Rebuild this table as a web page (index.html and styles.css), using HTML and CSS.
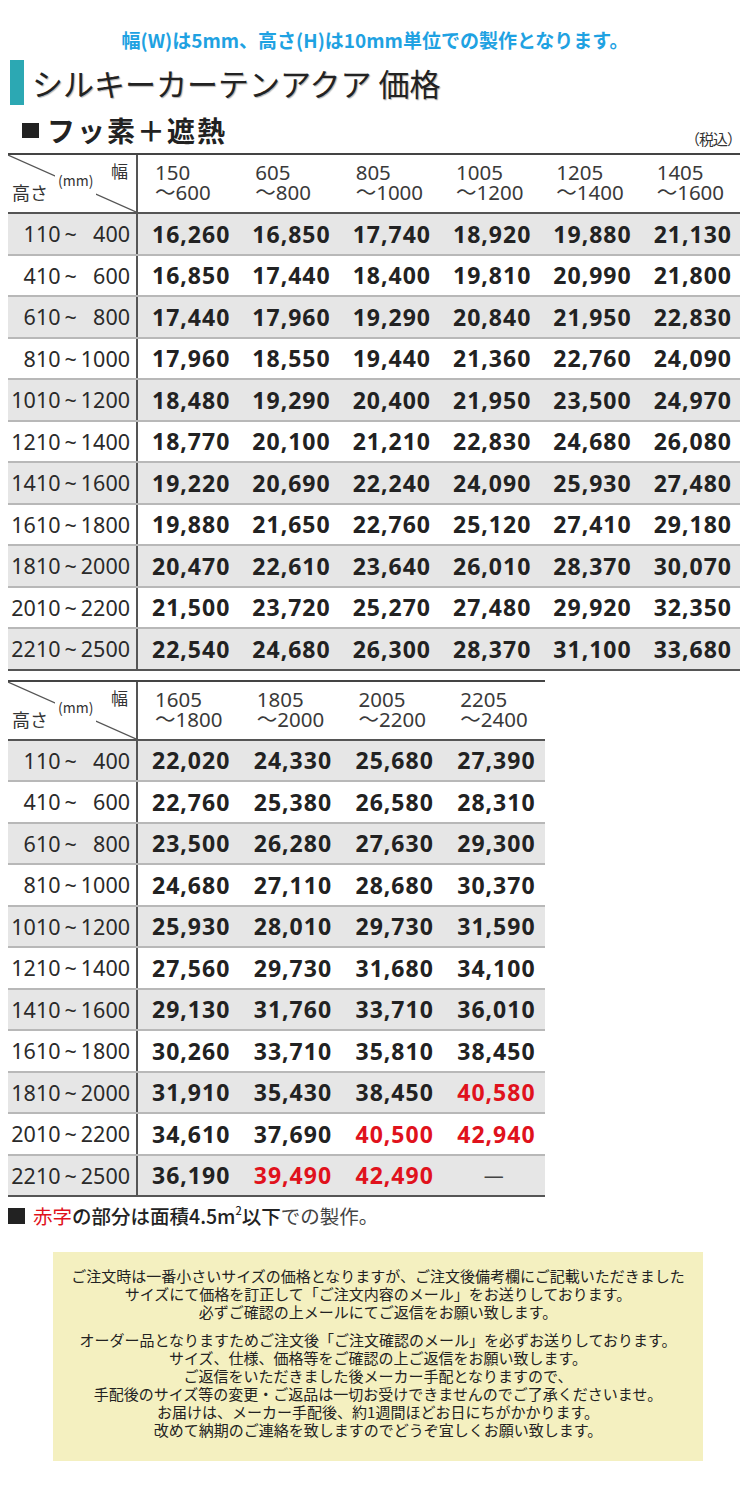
FILE: index.html
```html
<!DOCTYPE html>
<html lang="ja">
<head>
<meta charset="utf-8">
<title>シルキーカーテンアクア 価格</title>
<link rel="stylesheet" href="styles.css">
</head>
<body>
<div class="page">
  <p class="notice">幅(W)は5mm、高さ(H)は10mm単位での製作となります。</p>

  <div class="title">
    <span class="title-bar"></span>
    <h1 class="title-text">シルキーカーテンアクア 価格</h1>
  </div>

  <div class="subhead">
    <h2 class="subtitle"><span class="sq"></span>フッ素＋遮熱</h2>
    <span class="tax">（税込）</span>
  </div>

  <div class="ptable cols6">
    <div class="prow head">
      <div class="corner">
        <svg class="diag" viewBox="0 0 128 57" preserveAspectRatio="none"><line x1="0" y1="0" x2="128" y2="57" stroke="#555" stroke-width="1.2"/></svg>
        <span class="c-w">幅</span>
        <span class="c-mm">(mm)</span>
        <span class="c-h">高さ</span>
      </div>
      <div class="hc"><span>150</span><span>～600</span></div>
      <div class="hc"><span>605</span><span>～800</span></div>
      <div class="hc"><span>805</span><span>～1000</span></div>
      <div class="hc"><span>1005</span><span>～1200</span></div>
      <div class="hc"><span>1205</span><span>～1400</span></div>
      <div class="hc"><span>1405</span><span>～1600</span></div>
    </div>
    <div class="prow g"><div class="lab">110<span class="t">~</span>&#8199;400</div><div class="v">16,260</div><div class="v">16,850</div><div class="v">17,740</div><div class="v">18,920</div><div class="v">19,880</div><div class="v">21,130</div></div>
    <div class="prow"><div class="lab">410<span class="t">~</span>&#8199;600</div><div class="v">16,850</div><div class="v">17,440</div><div class="v">18,400</div><div class="v">19,810</div><div class="v">20,990</div><div class="v">21,800</div></div>
    <div class="prow g"><div class="lab">610<span class="t">~</span>&#8199;800</div><div class="v">17,440</div><div class="v">17,960</div><div class="v">19,290</div><div class="v">20,840</div><div class="v">21,950</div><div class="v">22,830</div></div>
    <div class="prow"><div class="lab">810<span class="t">~</span>1000</div><div class="v">17,960</div><div class="v">18,550</div><div class="v">19,440</div><div class="v">21,360</div><div class="v">22,760</div><div class="v">24,090</div></div>
    <div class="prow g"><div class="lab">1010<span class="t">~</span>1200</div><div class="v">18,480</div><div class="v">19,290</div><div class="v">20,400</div><div class="v">21,950</div><div class="v">23,500</div><div class="v">24,970</div></div>
    <div class="prow"><div class="lab">1210<span class="t">~</span>1400</div><div class="v">18,770</div><div class="v">20,100</div><div class="v">21,210</div><div class="v">22,830</div><div class="v">24,680</div><div class="v">26,080</div></div>
    <div class="prow g"><div class="lab">1410<span class="t">~</span>1600</div><div class="v">19,220</div><div class="v">20,690</div><div class="v">22,240</div><div class="v">24,090</div><div class="v">25,930</div><div class="v">27,480</div></div>
    <div class="prow"><div class="lab">1610<span class="t">~</span>1800</div><div class="v">19,880</div><div class="v">21,650</div><div class="v">22,760</div><div class="v">25,120</div><div class="v">27,410</div><div class="v">29,180</div></div>
    <div class="prow g"><div class="lab">1810<span class="t">~</span>2000</div><div class="v">20,470</div><div class="v">22,610</div><div class="v">23,640</div><div class="v">26,010</div><div class="v">28,370</div><div class="v">30,070</div></div>
    <div class="prow"><div class="lab">2010<span class="t">~</span>2200</div><div class="v">21,500</div><div class="v">23,720</div><div class="v">25,270</div><div class="v">27,480</div><div class="v">29,920</div><div class="v">32,350</div></div>
    <div class="prow g last"><div class="lab">2210<span class="t">~</span>2500</div><div class="v">22,540</div><div class="v">24,680</div><div class="v">26,300</div><div class="v">28,370</div><div class="v">31,100</div><div class="v">33,680</div></div>
  </div>

  <div class="ptable cols4 second">
    <div class="prow head">
      <div class="corner">
        <svg class="diag" viewBox="0 0 128 57" preserveAspectRatio="none"><line x1="0" y1="0" x2="128" y2="57" stroke="#555" stroke-width="1.2"/></svg>
        <span class="c-w">幅</span>
        <span class="c-mm">(mm)</span>
        <span class="c-h">高さ</span>
      </div>
      <div class="hc"><span>1605</span><span>～1800</span></div>
      <div class="hc"><span>1805</span><span>～2000</span></div>
      <div class="hc"><span>2005</span><span>～2200</span></div>
      <div class="hc"><span>2205</span><span>～2400</span></div>
    </div>
    <div class="prow g"><div class="lab">110<span class="t">~</span>&#8199;400</div><div class="v">22,020</div><div class="v">24,330</div><div class="v">25,680</div><div class="v">27,390</div></div>
    <div class="prow"><div class="lab">410<span class="t">~</span>&#8199;600</div><div class="v">22,760</div><div class="v">25,380</div><div class="v">26,580</div><div class="v">28,310</div></div>
    <div class="prow g"><div class="lab">610<span class="t">~</span>&#8199;800</div><div class="v">23,500</div><div class="v">26,280</div><div class="v">27,630</div><div class="v">29,300</div></div>
    <div class="prow"><div class="lab">810<span class="t">~</span>1000</div><div class="v">24,680</div><div class="v">27,110</div><div class="v">28,680</div><div class="v">30,370</div></div>
    <div class="prow g"><div class="lab">1010<span class="t">~</span>1200</div><div class="v">25,930</div><div class="v">28,010</div><div class="v">29,730</div><div class="v">31,590</div></div>
    <div class="prow"><div class="lab">1210<span class="t">~</span>1400</div><div class="v">27,560</div><div class="v">29,730</div><div class="v">31,680</div><div class="v">34,100</div></div>
    <div class="prow g"><div class="lab">1410<span class="t">~</span>1600</div><div class="v">29,130</div><div class="v">31,760</div><div class="v">33,710</div><div class="v">36,010</div></div>
    <div class="prow"><div class="lab">1610<span class="t">~</span>1800</div><div class="v">30,260</div><div class="v">33,710</div><div class="v">35,810</div><div class="v">38,450</div></div>
    <div class="prow g"><div class="lab">1810<span class="t">~</span>2000</div><div class="v">31,910</div><div class="v">35,430</div><div class="v">38,450</div><div class="v red">40,580</div></div>
    <div class="prow"><div class="lab">2010<span class="t">~</span>2200</div><div class="v">34,610</div><div class="v">37,690</div><div class="v red">40,500</div><div class="v red">42,940</div></div>
    <div class="prow g last"><div class="lab">2210<span class="t">~</span>2500</div><div class="v">36,190</div><div class="v red">39,490</div><div class="v red">42,490</div><div class="v dash">—</div></div>
  </div>

  <p class="footnote"><span class="fsq"></span><span class="redtxt">赤字</span><b>の部分は面積4.5m<sup>2</sup>以下</b>での製作。</p>

  <div class="infobox">
    <p>ご注文時は一番小さいサイズの価格となりますが、ご注文後備考欄にご記載いただきました<br>サイズにて価格を訂正して「ご注文内容のメール」をお送りしております。<br>必ずご確認の上メールにてご返信をお願い致します。</p>
    <p>オーダー品となりますためご注文後「ご注文確認のメール」を必ずお送りしております。<br>サイズ、仕様、価格等をご確認の上ご返信をお願い致します。<br>ご返信をいただきました後メーカー手配となりますので、<br>手配後のサイズ等の変更・ご返品は一切お受けできませんのでご了承くださいませ。<br>お届けは、メーカー手配後、約1週間ほどお日にちがかかります。<br>改めて納期のご連絡を致しますのでどうぞ宜しくお願い致します。</p>
  </div>
</div>
</body>
</html>
```

FILE: styles.css
```css
* { box-sizing: border-box; }

body {
  margin: 0;
  background: #fff;
  color: #222;
  font-family: "Noto Sans CJK JP", "Noto Sans", sans-serif;
}

.page {
  width: 750px;
  padding-bottom: 30px;
}

.notice {
  margin: 0;
  padding-top: 28px;
  text-align: center;
  color: #1fa2e2;
  font-weight: 700;
  font-size: 19px;
  line-height: 24px;
}

.title {
  display: flex;
  align-items: center;
  gap: 8px;
  margin: 8px 0 0 10px;
  height: 45px;
}

.title-bar {
  width: 14px;
  height: 45px;
  background: #2ca8b3;
}

.title-text {
  margin: 0;
  font-size: 31px;
  font-weight: 400;
  line-height: 45px;
  color: #222;
  text-shadow: 1px 1px 1px rgba(0, 0, 0, 0.3);
}

.subhead {
  display: flex;
  justify-content: space-between;
  align-items: flex-start;
  height: 48px;
  padding: 0 9px 0 22px;
}

.subtitle {
  display: flex;
  align-items: center;
  margin: 10px 0 0;
  font-size: 28px;
  font-weight: 700;
  line-height: 30px;
  letter-spacing: 2px;
  color: #222;
}

.sq {
  width: 17px;
  height: 15px;
  margin-right: 8px;
  background: #222;
}

.tax {
  margin-top: 24px;
  font-size: 15px;
  line-height: 20px;
  letter-spacing: -1px;
  color: #333;
}

/* price tables */
.ptable {
  margin-left: 8px;
  border-top: 2px solid #444;
}

.cols6 { width: 732px; }
.cols4 { width: 537px; }
.second { margin-top: 9px; }

.prow {
  display: grid;
  height: 41.5px;
  border-bottom: 2px solid #b8b8b8;
}

.cols6 .prow { grid-template-columns: 130px repeat(6, 1fr); }
.cols4 .prow { grid-template-columns: 130px repeat(4, 1fr); }

.prow.head {
  height: 59px;
  border-bottom: 2px solid #555;
}

.prow.g { background: #e6e6e6; }
.prow.last { border-bottom: 2px solid #555; }

.corner {
  position: relative;
  border-right: 2px solid #555;
}

.diag {
  position: absolute;
  left: 0;
  top: 0;
  width: 100%;
  height: 100%;
}

.c-w {
  position: absolute;
  right: 8px;
  top: 6px;
  font-size: 17px;
  line-height: 20px;
  color: #333;
}

.c-mm {
  position: absolute;
  left: 47px;
  top: 14px;
  padding: 2px 3px 6px;
  background: #fff;
  font-size: 14px;
  line-height: 18px;
  color: #333;
}

.c-h {
  position: absolute;
  left: 4px;
  bottom: 9px;
  font-size: 18px;
  line-height: 22px;
  color: #333;
}

.hc {
  display: flex;
  flex-direction: column;
  justify-content: center;
  padding-left: 17px;
  font-family: "Noto Sans", "Noto Sans CJK JP", sans-serif;
  font-size: 20.5px;
  font-weight: 400;
  color: #3a3a3a;
}

.hc span {
  display: block;
  height: 20px;
  line-height: 20px;
  overflow: visible;
}

.hc span:first-child { margin-top: -3px; }

.lab {
  display: flex;
  align-items: center;
  justify-content: flex-end;
  padding-right: 6px;
  border-right: 2px solid #555;
  font-family: "Noto Sans", "Noto Sans CJK JP", sans-serif;
  font-size: 21.5px;
  font-weight: 400;
  color: #2a2a2a;
  white-space: pre;
}

.lab .t {
  margin: 0 4px;
}

.v {
  display: flex;
  align-items: center;
  padding-left: 14px;
  font-family: "Noto Sans", "Noto Sans CJK JP", sans-serif;
  font-size: 23px;
  font-weight: 700;
  letter-spacing: 1px;
  color: #222;
}

.v.red { color: #e0121c; }

.v.dash {
  justify-content: center;
  padding-left: 0;
  font-weight: 400;
  font-size: 20px;
  color: #444;
}

.footnote {
  display: flex;
  align-items: center;
  margin: 6px 0 0 8px;
  font-size: 19.5px;
  line-height: 26px;
  color: #444;
}

.footnote b {
  font-weight: 500;
  color: #222;
}

.footnote sup {
  font-size: 11px;
  line-height: 0;
  vertical-align: 9px;
}

.fsq {
  width: 17px;
  height: 16px;
  margin-right: 8px;
  background: #222;
}

.redtxt { color: #e0121c; }

.infobox {
  width: 650px;
  margin: 23px 0 0 53px;
  padding: 15px 0 22px;
  background: #f4f0c0;
  text-align: center;
  font-size: 15px;
  line-height: 18px;
  color: #222;
}

.infobox p { margin: 0; }
.infobox p + p { margin-top: 10px; }
```
